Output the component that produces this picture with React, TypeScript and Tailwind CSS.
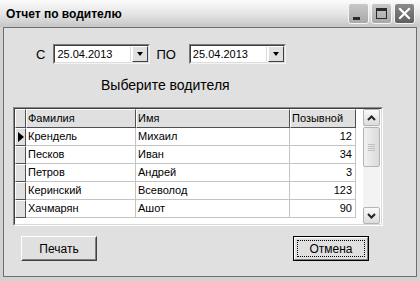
import React from 'react';

type Driver = { id: number; last: string; first: string; callsign: number };

const drivers: Driver[] = [
    { id: 1, last: 'Крендель', first: 'Михаил', callsign: 12 },
    { id: 2, last: 'Песков', first: 'Иван', callsign: 34 },
    { id: 3, last: 'Петров', first: 'Андрей', callsign: 3 },
    { id: 4, last: 'Керинский', first: 'Всеволод', callsign: 123 },
    { id: 5, last: 'Хачмарян', first: 'Ашот', callsign: 90 },
];

function TitleButton({ kind }: { kind: 'min' | 'max' | 'close' }) {
    const dark = kind === 'close';
    return (
        <div
            className={`w-[21px] h-[21px] rounded-[3px] border flex items-center justify-center ${
                dark ? 'bg-gradient-to-b from-[#8a8a8a] to-[#5e5e5e] border-[#f4f4f4]' : 'bg-gradient-to-b from-[#c8c8c8] to-[#a8a8a8] border-[#f4f4f4]'
            }`}
        >
            {kind === 'min' && <div className="w-[7px] h-[3px] bg-[#2a2a2a] mt-[9px] mr-[4px]" />}
            {kind === 'max' && <div className="w-[11px] h-[11px] border border-[#2a2a2a] border-t-[3px]" />}
            {kind === 'close' && (
                <svg width="13" height="13" viewBox="0 0 13 13">
                    <path d="M2 2 L11 11 M11 2 L2 11" stroke="#fff" strokeWidth="2.2" strokeLinecap="square" />
                </svg>
            )}
        </div>
    );
}

function DateBox({ value }: { value: string }) {
    return (
        <div className="w-[97px] h-[20px] border border-t-[#7a7a7a] border-l-[#7a7a7a] border-b-[#f4f4f4] border-r-[#f4f4f4]">
            <div className="h-full flex items-center bg-white border border-t-[#404040] border-l-[#404040] border-b-[#dcdcdc] border-r-[#dcdcdc]">
                <span className="flex-1 pl-[2px] text-[11px] text-black leading-none">{value}</span>
                <div className="w-px h-[14px] bg-[#d8d8d8] mr-[1px]" />
                <div className="w-[16px] h-[16px] bg-[#e0e0e0] border border-t-white border-l-white border-b-[#404040] border-r-[#404040] flex items-center justify-center">
                    <div className="w-0 h-0 border-l-[3.5px] border-r-[3.5px] border-t-[4px] border-l-transparent border-r-transparent border-t-black" />
                </div>
            </div>
        </div>
    );
}

function HeaderCell({ w, children }: { w: string; children?: React.ReactNode }) {
    return (
        <div className={`${w} h-full bg-[#e0e0e0] border border-t-white border-l-white border-b-[#505050] border-r-[#505050] flex items-center pl-[1px] text-[11px] leading-none text-black`}>
            {children}
        </div>
    );
}

function ScrollButton({ up }: { up: boolean }) {
    return (
        <div className="w-[17px] h-[17px] rounded-[2px] border border-[#b4b4b4] bg-gradient-to-b from-[#fafafa] to-[#dcdcdc] flex items-center justify-center">
            <svg width="9" height="6" viewBox="0 0 9 6">
                <path d={up ? 'M1 5 L4.5 1.5 L8 5' : 'M1 1 L4.5 4.5 L8 1'} stroke="#222" strokeWidth="2" fill="none" />
            </svg>
        </div>
    );
}

export default function App() {
    return (
        <div className="w-[420px] h-[281px] flex flex-col bg-[#d2d2d2] overflow-hidden" style={{ fontFamily: '"Liberation Sans", Arial, sans-serif' }}>
            {/* title bar */}
            <div className="h-[27px] flex items-center bg-gradient-to-b from-[#fbfbfb] via-[#e6e6e6] to-[#c6c6c6] pl-[6px] pr-[5px]">
                <span className="flex-1 text-[12px] font-bold text-black leading-none">Отчет по водителю</span>
                <div className="flex gap-[2px]">
                    <TitleButton kind="min" />
                    <TitleButton kind="max" />
                    <TitleButton kind="close" />
                </div>
            </div>

            {/* body */}
            <div className="flex-1 mx-[3px] mb-[4px] border border-[#6e6e6e] bg-[#e0e0e0] flex flex-col">
                <div className="mt-[16px] ml-[32px] flex items-center h-[20px]">
                    <span className="text-[13px] text-black leading-none">С</span>
                    <div className="ml-[8px]"><DateBox value="25.04.2013" /></div>
                    <span className="ml-[6px] text-[13px] text-black leading-none">ПО</span>
                    <div className="ml-[13px]"><DateBox value="25.04.2013" /></div>
                </div>

                <div className="mt-[13px] ml-[97px] h-[16px] flex items-center text-[14px] text-black leading-none">Выберите водителя</div>

                {/* grid */}
                <div className="mt-[14px] ml-[9px] w-[370px] h-[119px] border border-t-[#8a8a8a] border-l-[#8a8a8a] border-b-white border-r-white">
                    <div className="h-full bg-white border border-t-[#404040] border-l-[#404040] border-b-[#dcdcdc] border-r-[#dcdcdc] flex">
                        <div className="w-[341px] flex flex-col">
                            <div className="h-[19px] flex">
                                <HeaderCell w="w-[11px]" />
                                <HeaderCell w="w-[110px]">Фамилия</HeaderCell>
                                <HeaderCell w="w-[154px]">Имя</HeaderCell>
                                <HeaderCell w="w-[66px]">Позывной</HeaderCell>
                            </div>
                            {drivers.map((d, i) => (
                                <div key={d.id} className="h-[18px] flex text-[11px] leading-none text-black">
                                    <div className="w-[11px] h-full bg-[#e0e0e0] border border-t-white border-l-white border-b-[#505050] border-r-[#505050] flex items-center justify-center">
                                        {i === 0 && <div className="w-0 h-0 border-t-[5px] border-b-[5px] border-l-[6px] border-t-transparent border-b-transparent border-l-black" />}
                                    </div>
                                    <div className="w-[110px] h-full border-r border-b border-[#c4c4c4] flex items-center pl-[2px]">{d.last}</div>
                                    <div className="w-[154px] h-full border-r border-b border-[#c4c4c4] flex items-center pl-[2px]">{d.first}</div>
                                    <div className="w-[66px] h-full border-r border-b border-[#c4c4c4] flex items-center justify-end pr-[3px]">{d.callsign}</div>
                                </div>
                            ))}
                        </div>
                        <div className="flex-1" />
                        {/* scrollbar */}
                        <div className="w-[17px] mr-[1px] bg-[#f3f3f3] flex flex-col">
                            <ScrollButton up />
                            <div className="mt-[1px] w-[17px] h-[40px] rounded-[2px] border border-[#b4b4b4] bg-gradient-to-r from-[#f2f2f2] to-[#dadada] flex flex-col items-center justify-center gap-[1px]">
                                <div className="w-[7px] h-px bg-[#c0c0c0]" />
                                <div className="w-[7px] h-px bg-[#c0c0c0]" />
                                <div className="w-[7px] h-px bg-[#c0c0c0]" />
                                <div className="w-[7px] h-px bg-[#c0c0c0]" />
                            </div>
                            <div className="flex-1" />
                            <ScrollButton up={false} />
                        </div>
                    </div>
                </div>

                {/* buttons */}
                <div className="mt-[10px] flex">
                    <div className="ml-[17px] w-[76px] h-[25px] border border-t-white border-l-white border-b-[#404040] border-r-[#404040]">
                        <div className="h-full border border-t-[#e0e0e0] border-l-[#e0e0e0] border-b-[#808080] border-r-[#808080] flex items-center justify-center text-[12px] text-black leading-none">Печать</div>
                    </div>
                    <div className="ml-[196px] w-[76px] h-[25px] border border-black">
                        <div className="h-full border border-t-white border-l-white border-b-[#808080] border-r-[#808080] p-[2px]">
                            <div className="h-full border border-dotted border-black flex items-center justify-center text-[12px] text-black leading-none">Отмена</div>
                        </div>
                    </div>
                </div>
            </div>
        </div>
    );
}
